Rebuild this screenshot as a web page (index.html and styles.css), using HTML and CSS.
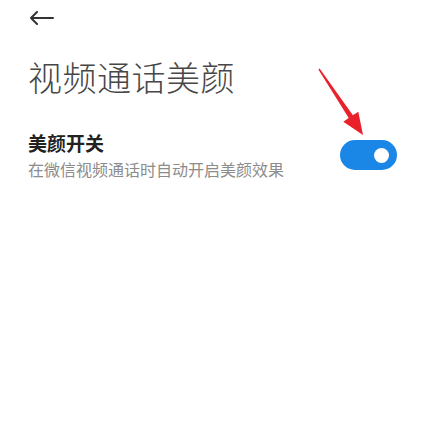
FILE: index.html
```html
<!DOCTYPE html>
<html lang="zh-CN">
<head>
<meta charset="utf-8">
<link rel="stylesheet" href="styles.css">
</head>
<body>
<div class="page">
  <div class="topbar">
    <svg class="back" width="26" height="14" viewBox="0 0 26 14">
      <path d="M24 7 H2 M8 1 L2 7 L8 13" fill="none" stroke="#333" stroke-width="2" stroke-linecap="round" stroke-linejoin="round"/>
    </svg>
  </div>
  <h1 class="title">视频通话美颜</h1>
  <div class="row">
    <div class="texts">
      <div class="label">美颜开关</div>
      <div class="desc">在微信视频通话时自动开启美颜效果</div>
    </div>
    <div class="toggle"><div class="knob"></div></div>
  </div>
  <svg class="annot" width="425" height="444" viewBox="0 0 425 444">
    <polygon points="318.4,69.4 348.7,118.1 343.3,121.7 363,135 358.3,111.7 352.9,115.3 319.6,68.6" fill="#e8212b"/>
  </svg>
</div>
</body>
</html>
```
FILE: styles.css
```css
html, body {
  margin: 0;
  padding: 0;
  background: #fff;
}
.page {
  position: relative;
  width: 425px;
  height: 444px;
  overflow: hidden;
  font-family: "Noto Sans CJK SC", "Noto Sans", sans-serif;
  box-sizing: border-box;
  padding: 11px 28px 0 28px;
}
.topbar {
  height: 14px;
  display: flex;
  align-items: center;
}
.back {
  display: block;
  margin-left: 1px;
}
.title {
  margin: 35px 0 0 0;
  font-size: 34px;
  line-height: 34px;
  font-weight: 300;
  color: #474747;
  letter-spacing: 0.5px;
}
.row {
  margin-top: 37px;
  display: flex;
  align-items: center;
  justify-content: space-between;
}
.texts {
  display: flex;
  flex-direction: column;
}
.label {
  font-size: 19px;
  line-height: 24px;
  font-weight: 700;
  color: #222;
}
.desc {
  margin-top: 4px;
  font-size: 16px;
  line-height: 20px;
  color: #8c8c8c;
}
.toggle {
  width: 57px;
  height: 30px;
  border-radius: 15px;
  background: #1a86e6;
  display: flex;
  align-items: center;
  justify-content: flex-end;
  box-sizing: border-box;
  padding-right: 8px;
}
.knob {
  width: 15px;
  height: 15px;
  border-radius: 50%;
  background: #fff;
}
.annot {
  position: absolute;
  left: 0;
  top: 0;
}
```
